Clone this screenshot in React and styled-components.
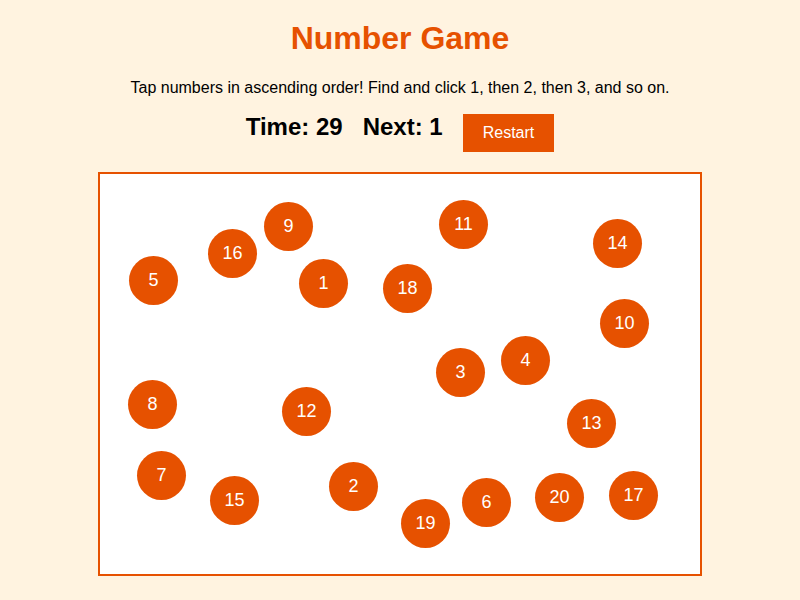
import React from "react";
import styled, { createGlobalStyle } from "styled-components";

const GlobalStyle = createGlobalStyle`
  body { margin: 0; background: #fff3e0; font-family: "Liberation Sans", Arial, sans-serif; color: #000; }
`;

const Page = styled.div`display:flex; flex-direction:column; align-items:center; padding-top:20px;`
const Title = styled.h1`margin:0; font-size:32px; font-weight:bold; color:#e65100;`
const Hint = styled.p`margin:22px 0 0 0; font-size:16px;`
const Stats = styled.div`display:flex; align-items:flex-start; gap:20px; margin-top:16px;`
const Stat = styled.span`font-size:24px; font-weight:bold;`
const RestartButton = styled.button`margin-top:1px; padding:10px 20px; font-family:inherit; font-size:16px; color:#fff; background:#e65100; border:0; cursor:pointer;`
const Board = styled.div`position:relative; width:600px; height:400px; margin-top:20px; background:#fff; border:2px solid #e65100;`
const Dot = styled.button`position:absolute; width:49px; height:49px; padding:0; border:0; border-radius:50%; background:#e65100; color:#fff; font-family:inherit; font-size:18px; display:flex; align-items:center; justify-content:center; cursor:pointer;`

// where each number sits on the board (left, top)
const dots = [
  [9, 164, 28], [11, 339, 26], [14, 493, 45], [16, 108, 55], [5, 29, 82],
  [1, 199, 85], [18, 283, 90], [10, 500, 125], [3, 336, 174], [4, 401, 162],
  [8, 28, 206], [12, 182, 213], [13, 467, 225], [7, 37, 277], [15, 110, 302],
  [2, 229, 288], [19, 301, 325], [6, 362, 304], [20, 435, 299], [17, 509, 297],
];

const App = () => {
  return (
    <Page>
      <GlobalStyle />
      <Title>Number Game</Title>
      <Hint>Tap numbers in ascending order! Find and click 1, then 2, then 3, and so on.</Hint>
      <Stats>
        <Stat>Time: 29</Stat>
        <Stat>Next: 1</Stat>
        <RestartButton>Restart</RestartButton>
      </Stats>
      <Board>
        {dots.map(([n, x, y]) => (
          <Dot key={n} style={{ left: x, top: y }}>{n}</Dot>
        ))}
      </Board>
    </Page>
  )
}

export default App
